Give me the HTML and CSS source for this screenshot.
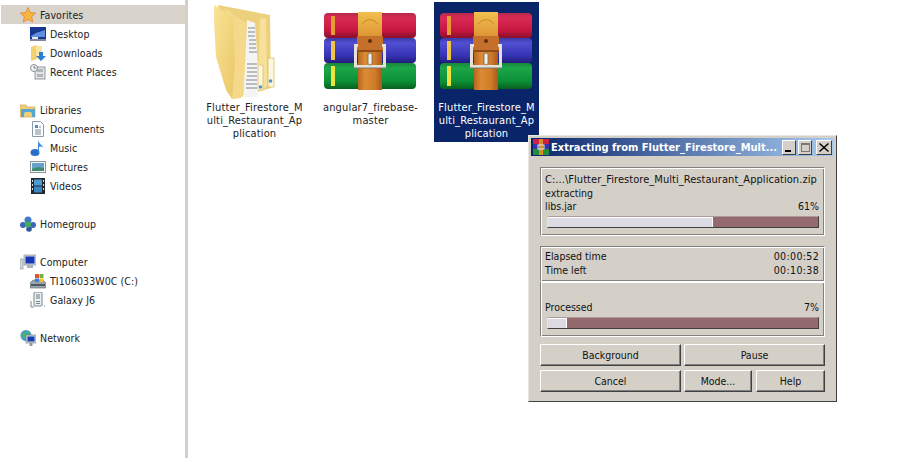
FILE: index.html
```html
<!DOCTYPE html>
<html lang="en">
<head>
    <meta charset="UTF-8">
    <title>Extracting from Flutter_Firestore_Multi_Restaurant_Application</title>
    <link rel="stylesheet" href="styles.css">
</head>
<body>
    <svg class="defs" width="0" height="0">
        <defs>
            <linearGradient id="redBook" x1="0" y1="0" x2="0" y2="1">
                <stop offset="0" stop-color="#b52a4c"/><stop offset=".2" stop-color="#d92a55"/><stop offset=".7" stop-color="#c7173f"/><stop offset="1" stop-color="#86102c"/>
            </linearGradient>
            <linearGradient id="blueBook" x1="0" y1="0" x2="0" y2="1">
                <stop offset="0" stop-color="#3e3aa8"/><stop offset=".2" stop-color="#5150d2"/><stop offset=".7" stop-color="#3634b4"/><stop offset="1" stop-color="#211c7c"/>
            </linearGradient>
            <linearGradient id="greenBook" x1="0" y1="0" x2="0" y2="1">
                <stop offset="0" stop-color="#17883a"/><stop offset=".2" stop-color="#1ba648"/><stop offset=".7" stop-color="#0d9036"/><stop offset="1" stop-color="#075f1f"/>
            </linearGradient>
            <linearGradient id="strap" x1="0" y1="0" x2="1" y2="0">
                <stop offset="0" stop-color="#b9651f"/><stop offset=".3" stop-color="#dc8c34"/><stop offset=".7" stop-color="#d07c2b"/><stop offset="1" stop-color="#a9591b"/>
            </linearGradient>
            <linearGradient id="strapTop" x1="0" y1="0" x2="0" y2="1">
                <stop offset="0" stop-color="#f2c04e"/><stop offset="1" stop-color="#dd9434"/>
            </linearGradient>
            <linearGradient id="folderFront" x1="0" y1="0" x2="1" y2="1">
                <stop offset="0" stop-color="#fae398"/><stop offset="1" stop-color="#e9c765"/>
            </linearGradient>
            <symbol id="rar" viewBox="0 0 92 78">
                <rect x="0" y="1" width="92" height="25" rx="4" fill="url(#redBook)"/>
                <rect x="0" y="26" width="92" height="25" rx="4" fill="url(#blueBook)"/>
                <rect x="0" y="51" width="92" height="26" rx="4" fill="url(#greenBook)"/>
                <rect x="7" y="4" width="4" height="19" fill="#e89a35"/>
                <rect x="7" y="29" width="4" height="19" fill="#efc548"/>
                <rect x="7" y="54" width="4" height="20" fill="#ede23e"/>
                <rect x="34" y="0" width="24" height="78" fill="url(#strap)"/>
                <path d="M34 0h24v25H34z" fill="url(#strapTop)"/>
                <path d="M38 12q8-9 16 0" fill="none" stroke="#c98a2e" stroke-width="1"/>
                <rect x="33" y="24" width="26" height="15" rx="1" fill="#c5702a"/>
                <rect x="33" y="38" width="26" height="2" fill="#8f4c17"/>
                <circle cx="46" cy="29" r="2" fill="#5e3010"/>
                <path d="M34 33.500H31.500V54.500H60.500V33.500H58" fill="none" stroke="#e4e1db" stroke-width="3"/>
                <path d="M30 56h32" stroke="#7d756a" stroke-width="1"/>
                <rect x="44" y="41" width="4" height="12" rx="2" fill="#f2f0ec" stroke="#6f685a" stroke-width=".8"/>
            </symbol>
        </defs>
    </svg>

    <nav class="sidebar">
        <div class="nav-row nav-active">
            <svg class="nav-icon" viewBox="0 0 16 16"><path d="M8 .5l2.300 5 5.400.6-4 3.600 1.100 5.400L8 12.400l-4.800 2.700 1.100-5.400-4-3.600 5.400-.6z" fill="#f9b53e" stroke="#e2853a" stroke-width=".8"/></svg>
            <span>Favorites</span>
        </div>
        <div class="nav-row nav-sub">
            <svg class="nav-icon" viewBox="0 0 16 16"><rect x="0" y="1" width="16" height="12" fill="#16368f"/><path d="M1 10q6-4 14-6v7H1z" fill="#5f8fde"/><rect x="0" y="13" width="16" height="2" fill="#7f8a9c"/><rect x="2" y="11" width="6" height="2" fill="#e6eaf2"/></svg>
            <span>Desktop</span>
        </div>
        <div class="nav-row nav-sub">
            <svg class="nav-icon" viewBox="0 0 16 16"><path d="M1 2l6-2v14l-6 2z" fill="#f2cf70"/><path d="M6 1h6v9H6z" fill="#f7e4a0"/><path d="M9 7h4v4h3l-5 5-5-5h3z" fill="#2f7fd0"/></svg>
            <span>Downloads</span>
        </div>
        <div class="nav-row nav-sub">
            <svg class="nav-icon" viewBox="0 0 16 16"><rect x="5" y="3" width="10" height="12" fill="#dfe3e6" stroke="#8f979c"/><rect x="7" y="5" width="6" height="3" fill="#aeb6bb"/><rect x="7" y="10" width="6" height="3" fill="#aeb6bb"/><circle cx="4" cy="4" r="3.500" fill="#f1f3f4" stroke="#868e92"/><path d="M4 2v2h2" fill="none" stroke="#555" stroke-width=".8"/></svg>
            <span>Recent Places</span>
        </div>
        <div class="nav-gap"></div>
        <div class="nav-row">
            <svg class="nav-icon" viewBox="0 0 16 16"><path d="M0 3h6l1 2h8v10H0z" fill="#f0cf78" stroke="#c9a64e" stroke-width=".7"/><path d="M1 15V8q0-1 1-1h12q1 0 1 1v7h-3v-3q0-2-2-2H6q-2 0-2 2v3z" fill="#5aa5cf"/></svg>
            <span>Libraries</span>
        </div>
        <div class="nav-row nav-sub">
            <svg class="nav-icon" viewBox="0 0 16 16"><path d="M2.500.5h8l3 3v12h-11z" fill="#fbfcfd" stroke="#8d99a6"/><path d="M5 4h3v3H5z" fill="#5a88c0"/><path d="M9 6h2M5 9h6M5 11h6M5 13h6" stroke="#7c8894"/></svg>
            <span>Documents</span>
        </div>
        <div class="nav-row nav-sub">
            <svg class="nav-icon" viewBox="0 0 16 16"><ellipse cx="5" cy="12.500" rx="4.500" ry="3.500" fill="#2a6fc4"/><path d="M8 13V0q1 4 6 7-4-1-5 0v6z" fill="#3d88d8"/></svg>
            <span>Music</span>
        </div>
        <div class="nav-row nav-sub">
            <svg class="nav-icon" viewBox="0 0 16 16"><rect x=".5" y="2.500" width="15" height="11" fill="#f3f5f6" stroke="#8a949a"/><rect x="2" y="4" width="12" height="8" fill="#67a3c9"/><path d="M2 10q5-3 12-1v3H2z" fill="#3f8a6a"/></svg>
            <span>Pictures</span>
        </div>
        <div class="nav-row nav-sub">
            <svg class="nav-icon" viewBox="0 0 16 16"><rect x="1" y="0" width="14" height="16" fill="#23282c"/><rect x="4" y="1.500" width="8" height="6" fill="#4d9ad0"/><rect x="4" y="8.500" width="8" height="6" fill="#3c86bd"/><path d="M2 2h1v2H2zM2 6h1v2H2zM2 10h1v2H2zM13 2h1v2h-1zM13 6h1v2h-1zM13 10h1v2h-1z" fill="#d6dade"/></svg>
            <span>Videos</span>
        </div>
        <div class="nav-gap"></div>
        <div class="nav-row">
            <svg class="nav-icon" viewBox="0 0 16 16"><circle cx="3" cy="9" r="3" fill="#3c67b5"/><circle cx="8" cy="4" r="3.500" fill="#4279c8"/><circle cx="13" cy="9" r="3" fill="#3c67b5"/><circle cx="9" cy="13" r="2.800" fill="#2f55a0"/><circle cx="8" cy="8.500" r="3" fill="#3fae5a"/></svg>
            <span>Homegroup</span>
        </div>
        <div class="nav-gap"></div>
        <div class="nav-row">
            <svg class="nav-icon" viewBox="0 0 16 16"><rect x="0" y="5" width="3" height="10" fill="#d5dade" stroke="#7f8b90" stroke-width=".6"/><rect x="4" y="1" width="12" height="10" fill="#cfd6dc" stroke="#7a858c" stroke-width=".6"/><rect x="5.500" y="2.500" width="9" height="7" fill="#1737b8"/><rect x="7" y="11" width="6" height="3" fill="#aab3b9"/></svg>
            <span>Computer</span>
        </div>
        <div class="nav-row nav-sub">
            <svg class="nav-icon" viewBox="0 0 16 16"><path d="M0 10l3-3h10l3 3v5H0z" fill="#9aa6ad" stroke="#5e6a70" stroke-width=".6"/><rect x="1" y="11" width="14" height="2" fill="#4d5a60"/><rect x="5" y="1" width="4" height="4" fill="#e2532f"/><rect x="9.500" y="1" width="4" height="4" fill="#6db33f"/><rect x="5" y="5.500" width="4" height="3.500" fill="#3b7fd4"/><rect x="9.500" y="5.500" width="4" height="3.500" fill="#f3c02f"/></svg>
            <span>TI106033W0C (C:)</span>
        </div>
        <div class="nav-row nav-sub">
            <svg class="nav-icon" viewBox="0 0 16 16"><rect x="4" y="0" width="8" height="14" rx="1" fill="#edf0f2" stroke="#7b858c"/><rect x="6" y="2" width="4" height="5" fill="#aab6bf"/><path d="M1 9v6h3M14 14h1" fill="none" stroke="#7b858c"/><rect x="6" y="9" width="4" height="1" fill="#7b858c"/><rect x="6" y="11" width="4" height="1" fill="#7b858c"/></svg>
            <span>Galaxy J6</span>
        </div>
        <div class="nav-gap"></div>
        <div class="nav-row">
            <svg class="nav-icon" viewBox="0 0 16 16"><circle cx="6" cy="5.500" r="5.500" fill="#3fa0c8"/><path d="M2 3q3-2 4 1t-3 4zM7 1q3 0 3 3L8 5z" fill="#57b05f"/><rect x="6" y="5" width="10" height="8" fill="#c9d2d8" stroke="#6f7b83" stroke-width=".6"/><rect x="7.500" y="6.500" width="7" height="5" fill="#1c3fb0"/><rect x="9.500" y="13" width="3" height="3" fill="#8f9ba3"/></svg>
            <span>Network</span>
        </div>
    </nav>

    <main class="files">
        <div class="tile">
            <svg class="folder" viewBox="0 0 81 98">
                <path d="M4 3L56 13 57 86 20 97z" fill="#edd07c"/>
                <path d="M46 16L52 17 53 84 44 90z" fill="#f7e19a"/>
                <path d="M11 6L32 21 33 65 27 96 18 97z" fill="#f5d98a"/>
                <path d="M33 18L41 21 44 65V95H29L31 65z" fill="#f4f4f2"/>
                <path d="M34 26h7M34 30h7M34 34h7M35 38h7M35 42h7M35 46h7M35 50h8M33 62h10M33 66h10M33 70h10M33 74h10M32 78h11M32 82h11M32 86h11" stroke="#a6aaae" stroke-width="1.500"/>
                <path d="M44 63h5V88H44z" fill="#fbf6dd" stroke="#dcbf6c" stroke-width=".8"/>
                <path d="M54 56h6V85H54z" fill="#fbf6dd" stroke="#dcbf6c" stroke-width=".8"/>
                <circle cx="46.500" cy="85" r="1.800" fill="#4f93c9"/>
                <circle cx="56.500" cy="79" r="1.800" fill="#4f93c9"/>
                <path d="M0 3L19 15 21 61 18 97 12 88 2 55 0 18z" fill="url(#folderFront)"/>
            </svg>
            <span class="tile-label">Flutter_Firestore_M<br>ulti_Restaurant_Ap<br>plication</span>
        </div>
        <div class="tile">
            <svg class="rar-icon"><use href="#rar"/></svg>
            <span class="tile-label">angular7_firebase-<br>master</span>
        </div>
        <div class="tile tile-selected">
            <svg class="rar-icon"><use href="#rar"/></svg>
            <span class="tile-label">Flutter_Firestore_M<br>ulti_Restaurant_Ap<br>plication</span>
        </div>
    </main>

    <section class="dialog">
        <header class="titlebar">
            <svg class="title-icon" viewBox="0 0 16 16">
                <rect width="16" height="5" fill="#cc2244"/><rect y="5" width="16" height="5" fill="#3534a8"/><rect y="10" width="16" height="6" fill="#1f8f3a"/><rect x="6" width="4" height="16" fill="#d98a2c"/><rect x="5" y="6" width="6" height="4" fill="none" stroke="#eee"/>
            </svg>
            <span class="title-text">Extracting from Flutter_Firestore_Mult...</span>
            <span class="title-btn"><i class="glyph-min"></i></span>
            <span class="title-btn title-max"><i class="glyph-max"></i></span>
            <span class="title-btn title-close">
                <svg viewBox="0 0 10 9" width="10" height="9"><path d="M1 0l4 3.500L9 0l1 1-4 3.500L10 8 9 9 5 5.500 1 9 0 8l4-3.500L0 1z" fill="#000"/></svg>
            </span>
        </header>
        <div class="dialog-body">
            <div class="panel panel-file">
                <div class="path-line">C:...\Flutter_Firestore_Multi_Restaurant_Application.zip</div>
                <div>extracting</div>
                <div class="line"><span>libs.jar</span><span>61%</span></div>
                <div class="bar"><div class="bar-fill" style="width: 61%"></div></div>
            </div>
            <div class="panel panel-time">
                <div class="line"><span>Elapsed time</span><span class="time-value">00:00:52</span></div>
                <div class="line"><span>Time left</span><span class="time-value">00:10:38</span></div>
            </div>
            <div class="panel panel-total">
                <div class="line"><span>Processed</span><span>7%</span></div>
                <div class="bar"><div class="bar-fill" style="width: 7%"></div></div>
            </div>
            <div class="buttons">
                <button class="btn">Background</button>
                <button class="btn">Pause</button>
                <button class="btn">Cancel</button>
                <div class="btn-pair">
                    <button class="btn">Mode...</button>
                    <button class="btn">Help</button>
                </div>
            </div>
        </div>
    </section>
</body>
</html>
```

FILE: styles.css
```css
html, body {
    height: 100%;
}
body {
    margin: 0;
    display: flex;
    position: relative;
    overflow: hidden;
    background-color: #fff;
    color: #000;
    font-family: "DejaVu Sans Condensed", "DejaVu Sans", sans-serif;
    font-size: 10.5px;
}
.defs {
    position: absolute;
}

/* left navigation */
.sidebar {
    width: 185px;
    flex: none;
    padding-top: 5px;
    border-right: 3px solid #d4d0c8;
    box-sizing: content-box;
    letter-spacing: .08px;
}
.nav-row {
    height: 19px;
    margin-left: 1px;
    padding-left: 19px;
    display: flex;
    align-items: center;
    gap: 4px;
    color: #222;
}
.nav-sub {
    padding-left: 29px;
}
.nav-active {
    background-color: #d8d4cc;
}
.nav-gap {
    height: 19px;
}
.nav-icon {
    width: 16px;
    height: 16px;
    flex: none;
}

/* file icons */
.files {
    flex: 1;
    display: flex;
    align-items: flex-start;
    gap: 11px;
    padding: 2px 0 0 14px;
}
.tile {
    width: 105px;
    height: 140px;
    display: flex;
    flex-direction: column;
    align-items: center;
    color: #222;
}
.tile-selected {
    background-color: #0a246a;
    color: #fff;
}
.folder {
    width: 81px;
    height: 98px;
    margin-bottom: 1px;
}
.rar-icon {
    width: 92px;
    height: 78px;
    margin: 10px 1px 11px 0;
}
.tile-label {
    width: 105px;
    text-align: center;
    line-height: 13px;
    font-size: 11px;
    letter-spacing: .15px;
}

/* WinRAR dialog */
.dialog {
    position: absolute;
    left: 528px;
    top: 135px;
    width: 309px;
    height: 267px;
    box-sizing: border-box;
    background-color: #d4d0c8;
    border: 1px solid;
    border-color: #e8e6e0 #404040 #404040 #e8e6e0;
    padding: 2px;
}
.titlebar {
    height: 18px;
    display: flex;
    align-items: center;
    padding: 0 2px;
    background: linear-gradient(to right, #0a246a, #a6caf0);
    color: #fff;
}
.title-icon {
    width: 16px;
    height: 16px;
    flex: none;
}
.title-text {
    flex: 1;
    margin-left: 2px;
    padding-top: 1px;
    font-size: 11px;
    font-weight: bold;
    line-height: 17px;
    white-space: nowrap;
    overflow: hidden;
}
.title-btn {
    width: 14px;
    height: 15px;
    box-sizing: border-box;
    background-color: #d4d0c8;
    border: 1px solid;
    border-color: #fff #404040 #404040 #fff;
    display: flex;
    align-items: center;
    justify-content: center;
}
.title-max {
    margin-left: 2px;
}
.title-close {
    width: 16px;
    margin-left: 4px;
}
.glyph-min {
    width: 6px;
    height: 2px;
    margin-top: 7px;
    margin-right: 2px;
    background-color: #000;
}
.glyph-max {
    width: 9px;
    height: 9px;
    box-sizing: border-box;
    border: 1px solid #777;
    border-top-width: 2px;
}
.dialog-body {
    padding: 11px 10px 0 9px;
}
.panel {
    box-sizing: border-box;
    border: 1px solid;
    border-color: #808080 #fff #fff #808080;
    box-shadow: inset 1px 1px 0 #fff, inset -1px -1px 0 #808080;
    padding: 5px 5px 0 4px;
    line-height: 13.500px;
    color: #111;
}
.path-line {
    font-size: 11px;
    letter-spacing: .05px;
    white-space: nowrap;
}
.time-value {
    letter-spacing: .35px;
}
.panel-file {
    height: 69px;
    margin-right: -1px;
}
.panel-time {
    height: 35px;
    margin-top: 10px;
    margin-right: -1px;
    padding-top: 3px;
    border-bottom: 0;
}
.panel-total {
    height: 56px;
    margin-right: -1px;
    padding-top: 19px;
    border-top: 1px solid #fff;
}
.line {
    display: flex;
    justify-content: space-between;
}
.bar {
    height: 12px;
    margin: 2px 0 0 2px;
    box-sizing: border-box;
    background-color: #936b6e;
    border: 1px solid;
    border-color: #b09a9a #404040 #404040 #e8e6e0;
}
.bar-fill {
    height: 100%;
    background-color: #dcdbe3;
    border-top: 1px solid #fff;
    border-right: 1px solid #fff;
    box-sizing: border-box;
}
.buttons {
    display: grid;
    grid-template-columns: 141px 141px;
    grid-auto-rows: 22px;
    column-gap: 3px;
    row-gap: 4px;
    margin-top: 7px;
}
.btn-pair {
    display: grid;
    grid-template-columns: 68px 69px;
    column-gap: 4px;
}
.btn {
    padding: 0;
    background-color: #d4d0c8;
    border: 1px solid;
    border-color: #fff #404040 #404040 #fff;
    box-shadow: inset -1px -1px 0 #808080;
    color: #111;
    font-family: inherit;
    font-size: 10.5px;
}
```
